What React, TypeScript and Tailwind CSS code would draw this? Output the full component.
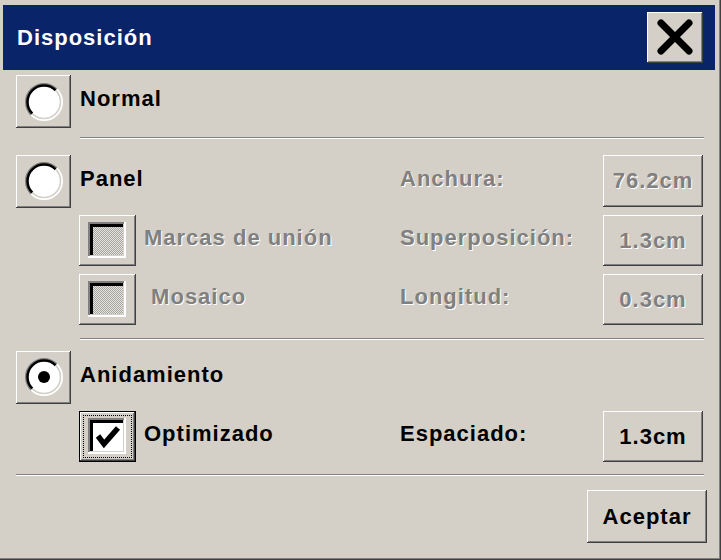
import React from 'react';

const raised =
  'bg-[#d4d0c8] shadow-[inset_-1px_-1px_#404040,inset_1px_1px_#ffffff,inset_-2px_-2px_#808080,inset_2px_2px_#d4d0c8]';
const disabledText = 'text-[#808080] [text-shadow:1px_1px_0_#ffffff]';

const RadioMark: React.FC<{ checked?: boolean }> = ({ checked }) => (
  <svg width="40" height="40" viewBox="0 0 40 40">
    <circle cx="20" cy="20" r="16" fill="#ffffff" />
    <path d="M7.27 32.73 A18 18 0 0 1 32.73 7.27" fill="none" stroke="#808080" strokeWidth="2" />
    <path d="M8.33 31.67 A16.5 16.5 0 0 1 31.67 8.33" fill="none" stroke="#000000" strokeWidth="2.5" />
    <path d="M32.73 7.27 A18 18 0 0 1 7.27 32.73" fill="none" stroke="#ffffff" strokeWidth="2" />
    <path d="M31.67 8.33 A16.5 16.5 0 0 1 8.33 31.67" fill="none" stroke="#d4d0c8" strokeWidth="1.5" />
    {checked && <circle cx="20" cy="20" r="6" fill="#000000" />}
  </svg>
);

const RadioButton: React.FC<{ checked?: boolean }> = ({ checked }) => (
  <div className={`w-[55px] h-[53px] flex items-center justify-center ${raised}`}>
    <RadioMark checked={checked} />
  </div>
);

const wellShadow =
  'shadow-[inset_-2px_-2px_#ffffff,inset_2px_2px_#808080,inset_-3px_-3px_#d4d0c8,inset_5px_5px_#000000]';

const CheckBox: React.FC<{ checked?: boolean; disabled?: boolean; focused?: boolean }> = ({
  checked,
  disabled,
  focused,
}) => {
  const frame = focused
    ? 'bg-[#d4d0c8] shadow-[inset_0_0_0_1px_#000000,inset_-2px_-2px_#404040,inset_2px_2px_#ffffff,inset_-3px_-3px_#808080]'
    : raised;
  return (
    <div className={`relative w-[57px] h-[51px] flex items-start pl-[9px] pt-[7px] ${frame}`}>
      {focused && (
        <span className="pointer-events-none absolute inset-[4px] border border-dotted border-black" />
      )}
      <div
        className={`w-[38px] h-[36px] ${wellShadow} ${
          disabled
            ? 'bg-[image:repeating-conic-gradient(#a8a6a0_0%_25%,#e4e2dc_0%_50%)] bg-[length:2px_2px]'
            : 'bg-white'
        }`}
      >
        {checked && (
          <svg width="38" height="36" viewBox="0 0 38 36">
            <polyline points="10,18 16,26 30,10" fill="none" stroke="#000000" strokeWidth="5.5" />
          </svg>
        )}
      </div>
    </div>
  );
};

const ValueBox: React.FC<{ value: string; disabled?: boolean; h: string }> = ({ value, disabled, h }) => (
  <div className={`w-[100px] ${h} flex items-center justify-center ${raised} ${disabled ? disabledText : 'text-black'}`}>
    {value}
  </div>
);

const RightPart: React.FC<{ label: string; value: string; disabled?: boolean; h: string }> = ({
  label,
  value,
  disabled,
  h,
}) => (
  <div className="flex items-center">
    <span className={`w-[203px] mb-[5px] ${disabled ? disabledText : 'text-black'}`}>{label}</span>
    <ValueBox value={value} disabled={disabled} h={h} />
  </div>
);

const Separator: React.FC<{ full?: boolean }> = ({ full }) => (
  <div
    className={`${full ? 'w-[688px]' : 'ml-[64px] w-[624px]'} h-[2px] border-t border-t-[#808080] border-b border-b-white`}
  />
);

export default function App() {
  return (
    <div className="w-[721px] h-[560px] bg-[#d4d0c8] shadow-[inset_-1px_-1px_#404040,inset_-2px_-2px_#808080] font-['Liberation_Sans',Arial,sans-serif] font-bold text-[22px] tracking-[1px] leading-none select-none overflow-hidden">
      {/* Title bar */}
      <div className="pt-[5px] pl-[3px] pr-[6px]">
        <div className="h-[65px] bg-[#0a246a] flex items-center justify-between pl-[14px] pr-[12px]">
          <span className="text-white">Disposición</span>
          <button className={`w-[56px] h-[51px] flex items-center justify-center pb-[1px] ${raised}`}>
            <svg width="38" height="38" viewBox="0 0 38 38">
              <path d="M5 5 L33 33 M33 5 L5 33" stroke="#000000" strokeWidth="7" strokeLinecap="round" />
            </svg>
          </button>
        </div>
      </div>

      <div className="pl-[16px]">
        {/* Normal */}
        <div className="mt-[5px] h-[53px] flex items-center">
          <RadioButton />
          <span className="ml-[9px] mb-[5px] text-black">Normal</span>
        </div>

        <div className="mt-[9px]">
          <Separator />
        </div>

        {/* Panel */}
        <div className="mt-[16px] h-[52px] flex items-center">
          <div className="w-[384px] flex items-center">
            <RadioButton />
            <span className="ml-[9px] mb-[5px] text-black">Panel</span>
          </div>
          <RightPart label="Anchura:" value="76.2cm" disabled h="h-[52px]" />
        </div>

        <div className="mt-[8px] h-[51px] flex items-center">
          <div className="w-[384px] pl-[63px] flex items-center">
            <CheckBox disabled />
            <span className={`ml-[8px] mb-[5px] ${disabledText}`}>Marcas de unión</span>
          </div>
          <RightPart label="Superposición:" value="1.3cm" disabled h="h-[51px]" />
        </div>

        <div className="mt-[8px] h-[51px] flex items-center">
          <div className="w-[384px] pl-[63px] flex items-center">
            <CheckBox disabled />
            <span className={`ml-[8px] mb-[5px] whitespace-pre ${disabledText}`}> Mosaico</span>
          </div>
          <RightPart label="Longitud:" value="0.3cm" disabled h="h-[51px]" />
        </div>

        <div className="mt-[13px]">
          <Separator />
        </div>

        {/* Anidamiento */}
        <div className="mt-[11px] h-[52px] flex items-center">
          <RadioButton checked />
          <span className="ml-[9px] mb-[5px] text-black">Anidamiento</span>
        </div>

        <div className="mt-[8px] h-[51px] flex items-center">
          <div className="w-[384px] pl-[63px] flex items-center">
            <CheckBox checked focused />
            <span className="ml-[8px] mb-[5px] text-black">Optimizado</span>
          </div>
          <RightPart label="Espaciado:" value="1.3cm" h="h-[51px]" />
        </div>

        <div className="mt-[12px]">
          <Separator full />
        </div>

        <div className="mt-[14px] w-[691px] flex justify-end">
          <button className={`w-[120px] h-[53px] flex items-center justify-center text-black ${raised}`}>
            Aceptar
          </button>
        </div>
      </div>
    </div>
  );
}
